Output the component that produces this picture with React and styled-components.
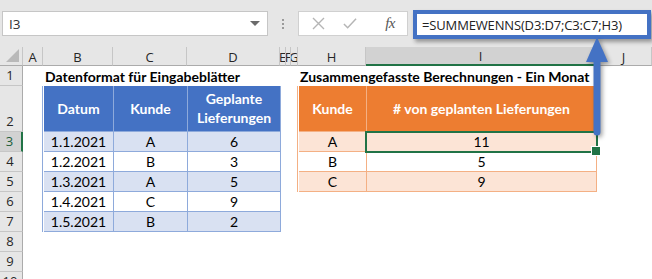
import React from "react";
import styled, { createGlobalStyle } from "styled-components";

const GlobalStyle = createGlobalStyle`
  html, body { margin: 0; padding: 0; background: #fff; }
  body { font-family: Lato, "Liberation Sans", sans-serif; }
  * { box-sizing: border-box; }
`;

const Window = styled.div`
  width: 652px;
  height: 279px;
  overflow: hidden;
  position: relative;
  background: #fff;
`;

const Toolbar = styled.div`
  height: 47px;
  background: #e6e6e6;
  display: flex;
  align-items: flex-start;
  padding: 11px 1px 0 2px;
`;

const NameBox = styled.div`
  width: 266px;
  height: 25px;
  background: #fff;
  border: 1px solid #c6c6c6;
  display: flex;
  align-items: center;
  justify-content: space-between;
  padding: 0 6px 0 6px;
  font-family: "Open Sans", sans-serif;
  font-size: 13.5px;
  color: #333;
`;

const Caret = styled.span`
  width: 0;
  height: 0;
  border-left: 5px solid transparent;
  border-right: 5px solid transparent;
  border-top: 5px solid #6b6b6b;
  margin-right: 1px;
`;

const Grip = styled.div`
  width: 30px;
  height: 25px;
  display: flex;
  flex-direction: column;
  align-items: center;
  justify-content: center;
  gap: 2px;
  span {
    width: 2px;
    height: 2px;
    background: #9a9a9a;
  }
`;

const EditButtons = styled.div`
  width: 110px;
  height: 25px;
  background: #fff;
  border: 1px solid #d0d0d0;
  display: flex;
  align-items: center;
  padding-left: 12px;
  gap: 10px;
`;

const IconBtn = styled.span`
  width: 14px;
  height: 14px;
  display: flex;
  align-items: center;
  justify-content: center;
`;

const Fx = styled.span`
  margin-left: auto;
  margin-right: 12px;
  font-family: "Liberation Serif", serif;
  font-style: italic;
  font-size: 15px;
  color: #555;
  letter-spacing: -0.5px;
`;

const FormulaBar = styled.div`
  flex: 1;
  margin-left: 5px;
  margin-top: -1px;
  height: 29px;
  background: #fff;
  border: 4px solid #4472c4;
  box-shadow: 2px 3px 4px rgba(0, 0, 0, 0.35);
  display: flex;
  align-items: center;
  padding-left: 5px;
  font-family: "Open Sans", sans-serif;
  font-size: 13px;
  letter-spacing: -0.15px;
  color: #222;
  position: relative;
  z-index: 2;
`;

const Sheet = styled.div`
  display: grid;
  grid-template-columns: 23px 20px 70px 74px 93px 6px 5px 7px 68px 230px 56px;
  grid-template-rows: 19px 20px 46px repeat(8, 20px);
  font-size: 14px;
  color: #000;
`;

const Corner = styled.div`
  grid-column: 1;
  grid-row: 1;
  background: #e6e6e6;
  border-right: 1px solid #c6c6c6;
  border-bottom: 1px solid #ababab;
  position: relative;
  &::after {
    content: "";
    position: absolute;
    right: 3px;
    bottom: 3px;
    border-left: 13px solid transparent;
    border-bottom: 13px solid #b9b9b9;
  }
`;

const ColHead = styled.div`
  grid-row: 1;
  background: ${({ $selected }) => ($selected ? "#d2d2d2" : "#e6e6e6")};
  border-right: 1px solid #c6c6c6;
  border-bottom: ${({ $selected }) => ($selected ? "2px solid #217346" : "1px solid #ababab")};
  display: flex;
  align-items: center;
  justify-content: center;
  overflow: hidden;
  font-family: "Open Sans", sans-serif;
  font-size: 13px;
  color: #262626;
  padding-top: 1px;
`;

const RowHead = styled.div`
  grid-column: 1;
  background: ${({ $selected }) => ($selected ? "#d2d2d2" : "#e6e6e6")};
  border-bottom: 1px solid #c6c6c6;
  border-right: ${({ $selected }) => ($selected ? "2px solid #217346" : "1px solid #ababab")};
  display: flex;
  align-items: flex-end;
  justify-content: center;
  padding-bottom: 1px;
  padding-right: 2px;
  font-family: "Open Sans", sans-serif;
  font-size: 13px;
  color: ${({ $selected }) => ($selected ? "#1d5e3a" : "#262626")};
`;

const SheetTitle = styled.div`
  grid-row: 2;
  grid-column: ${({ $col }) => $col};
  font-weight: 700;
  white-space: nowrap;
  display: flex;
  align-items: flex-end;
  padding: 0 0 1px 2px;
  z-index: 1;
`;

const DataTable = styled.div`
  grid-column: ${({ $col }) => $col};
  grid-row: ${({ $row }) => $row};
  margin-left: -1px;
  display: grid;
  grid-template-columns: 1px ${({ $cols }) => $cols};
  grid-template-rows: 46px repeat(${({ $rows }) => $rows}, 20px);
  border-left: 1px solid ${({ $line }) => $line};
`;

const HeadCell = styled.div`
  grid-column: ${({ $c }) => $c};
  background: ${({ $bg }) => $bg};
  color: #fff;
  font-weight: 700;
  text-align: center;
  line-height: 19px;
  display: flex;
  align-items: center;
  justify-content: center;
  border-right: 1px solid ${({ $line }) => $line};
  border-bottom: 1px solid ${({ $line }) => $line};
  padding-bottom: 1px;
`;

const BodyCell = styled.div`
  grid-column: ${({ $c }) => $c};
  position: relative;
  background: ${({ $bg }) => $bg};
  text-align: center;
  display: flex;
  align-items: flex-end;
  justify-content: center;
  padding-bottom: 1px;
  border-right: 1px solid ${({ $line }) => $line};
  border-bottom: 1px solid ${({ $line }) => $line};
`;

const Selection = styled.span`
  position: absolute;
  left: -2px;
  top: -1px;
  right: -2px;
  bottom: -2px;
  border: 2px solid #217346;
  pointer-events: none;
  z-index: 2;
  &::after {
    content: "";
    position: absolute;
    right: -5px;
    bottom: -5px;
    width: 8px;
    height: 8px;
    background: #217346;
    border: 1px solid #fff;
  }
`;

const Arrow = styled.svg`
  position: absolute;
  left: 584px;
  top: 36px;
  filter: drop-shadow(2px 2px 2px rgba(0, 0, 0, 0.35));
  z-index: 3;
`;

const columns = ["A", "B", "C", "D", "E", "F", "G", "H", "I", "J"];

const blue = {
  head: "#4472c4",
  line: "#8eaadb",
  band: "#d9e1f2",
};

const orange = {
  head: "#ed7d31",
  line: "#f4b084",
  band: "#fce4d6",
};

const inputRows = [
  ["1.1.2021", "A", "6"],
  ["1.2.2021", "B", "3"],
  ["1.3.2021", "A", "5"],
  ["1.4.2021", "C", "9"],
  ["1.5.2021", "B", "2"],
];

const summaryRows = [
  ["A", "11"],
  ["B", "5"],
  ["C", "9"],
];

const XIcon = () => (
  <svg width="13" height="13" viewBox="0 0 13 13">
    <path d="M1 1 L12 12 M12 1 L1 12" stroke="#b5b5b5" strokeWidth="1.4" fill="none" />
  </svg>
);

const CheckIcon = () => (
  <svg width="15" height="13" viewBox="0 0 15 13">
    <path d="M1 7 L5 11 L14 1.5" stroke="#b5b5b5" strokeWidth="1.6" fill="none" />
  </svg>
);

const Table = ({ theme, col, row, headers, rows, cols, selected }) => (
  <DataTable $col={col} $row={row} $cols={cols} $rows={rows.length} $line={theme.line}>
    {headers.map((h, i) => (
      <HeadCell key={h} $c={i + 2} $bg={theme.head} $line={theme.line}>
        {h}
      </HeadCell>
    ))}
    {rows.map((r, ri) =>
      r.map((v, ci) => (
        <BodyCell
          key={ri + "-" + ci}
          $c={ci + 2}
          $bg={ri % 2 === 0 ? theme.band : "#fff"}
          $line={theme.line}
        >
          {v}
          {selected && selected[0] === ri && selected[1] === ci && <Selection />}
        </BodyCell>
      ))
    )}
  </DataTable>
);

export default function App() {
  return (
    <Window>
      <GlobalStyle />
      <Toolbar>
        <NameBox>
          I3
          <Caret />
        </NameBox>
        <Grip>
          <span />
          <span />
          <span />
        </Grip>
        <EditButtons>
          <IconBtn>
            <XIcon />
          </IconBtn>
          <IconBtn style={{ marginLeft: 8 }}>
            <CheckIcon />
          </IconBtn>
          <Fx>fx</Fx>
        </EditButtons>
        <FormulaBar>=SUMMEWENNS(D3:D7;C3:C7;H3)</FormulaBar>
      </Toolbar>

      <Sheet>
        <Corner />
        {columns.map((c, i) => (
          <ColHead key={c} $selected={c === "I"} style={{ gridColumn: i + 2 }}>
            {c}
          </ColHead>
        ))}
        {Array.from({ length: 10 }, (_, i) => (
          <RowHead key={i} $selected={i === 2} style={{ gridRow: i + 2 }}>
            {i + 1}
          </RowHead>
        ))}

        <SheetTitle $col="3 / 6">Datenformat für Eingabeblätter</SheetTitle>
        <SheetTitle $col="9 / 12">Zusammengefasste Berechnungen - Ein Monat</SheetTitle>

        <Table
          theme={blue}
          col="3 / 6"
          row="3 / 9"
          cols="70px 74px 93px"
          headers={["Datum", "Kunde", "Geplante Lieferungen"]}
          rows={inputRows}
        />
        <Table
          theme={orange}
          col="9 / 11"
          row="3 / 7"
          cols="68px 230px"
          headers={["Kunde", "# von geplanten Lieferungen"]}
          rows={summaryRows}
          selected={[0, 1]}
        />
      </Sheet>

      <Arrow width="26" height="102" viewBox="0 0 26 102">
        <path d="M13 1 L24 26 L2 26 Z" fill="#4472c4" />
        <path d="M9.5 24 H16.5 V96 A3.5 3.5 0 0 1 9.5 96 Z" fill="#4472c4" />
      </Arrow>
    </Window>
  );
}
